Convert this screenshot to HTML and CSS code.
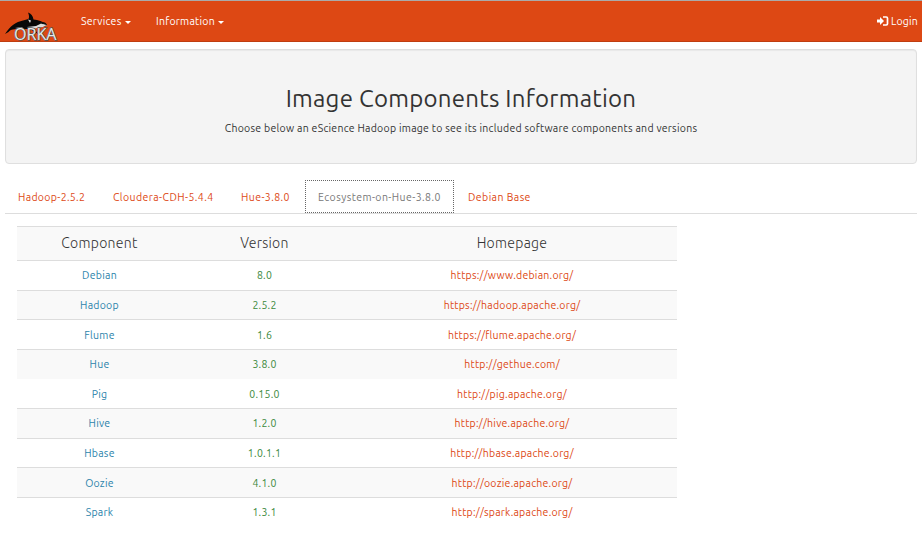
FILE: index.html
```
<!DOCTYPE html>
<html lang="en">
<head>
<meta charset="utf-8">
<title>Orka - Image Components Information</title>
<link rel="stylesheet" href="styles.css">
</head>
<body>
<header class="navbar">
  <a class="brand" aria-label="Orka">
    <svg width="54" height="31" viewBox="0 0 54 31">
      <path d="M0 22C5 14 11 10 18 8.500L23.500 7C24.500 5 24 3 23 0.500C26 1.500 28 4 28.500 7.500C33 8 38 9.500 42 12.500L41 14L34 16L28 15L33 22L25 17L15 17C9 17 6 17 3.500 20L0 22Z" fill="#080808"/>
      <path d="M23 7.500L26 8.500L25 11ZM31 14L37 11L40 12.500L42 13L38 15L32 16L28 17L22 15ZM10 16L18 15L15 17Z" fill="#ddd"/>
      <path d="M34 10L40 10.500L42 12.500L37 12Z" fill="#111"/>
      <text class="logo-text" x="9" y="27.500" textLength="42.500" lengthAdjust="spacingAndGlyphs">ORKA</text>
    </svg>
  </a>
  <a class="nav-link services">Services<i class="caret"></i></a>
  <a class="nav-link information">Information<i class="caret"></i></a>
  <a class="login">
    <svg width="12" height="10" viewBox="0 0 12 10"><path d="M0 3.500H3V1L7 5L3 9V6.500H0Z" fill="#fff"/><path d="M6 1H9.300Q10.500 1 10.500 2.200V7.800Q10.500 9 9.300 9H6" fill="none" stroke="#fff" stroke-width="1.700"/></svg>
    <span>Login</span>
  </a>
</header>
<main class="page">
  <section class="hero">
    <h1>Image Components Information</h1>
    <p>Choose below an eScience Hadoop image to see its included software components and versions</p>
  </section>
  <nav class="tabs">
    <a class="tab t1">Hadoop-2.5.2</a>
    <a class="tab t2">Cloudera-CDH-5.4.4</a>
    <a class="tab t3">Hue-3.8.0</a>
    <a class="tab t4 active">Ecosystem-on-Hue-3.8.0</a>
    <a class="tab t5">Debian Base</a>
  </nav>
  <section class="components">
    <div class="row head"><span>Component</span><span>Version</span><span>Homepage</span></div>
    <div class="row"><b>Debian</b><em>8.0</em><a>https://www.debian.org/</a></div>
    <div class="row"><b>Hadoop</b><em>2.5.2</em><a>https://hadoop.apache.org/</a></div>
    <div class="row low"><b>Flume</b><em>1.6</em><a>https://flume.apache.org/</a></div>
    <div class="row"><b>Hue</b><em>3.8.0</em><a>http://gethue.com/</a></div>
    <div class="row borderless low"><b>Pig</b><em>0.15.0</em><a>http://pig.apache.org/</a></div>
    <div class="row"><b>Hive</b><em>1.2.0</em><a>http://hive.apache.org/</a></div>
    <div class="row"><b>Hbase</b><em>1.0.1.1</em><a>http://hbase.apache.org/</a></div>
    <div class="row low"><b>Oozie</b><em>4.1.0</em><a>http://oozie.apache.org/</a></div>
    <div class="row"><b>Spark</b><em>1.3.1</em><a>http://spark.apache.org/</a></div>
  </section>
</main>
</body>
</html>
```
FILE: styles.css
```
* { box-sizing: border-box; }
body {
  margin: 0;
  height: 535px;
  overflow: hidden;
  background: #fff;
  color: #333;
  font: 10.5px/16px Ubuntu, "Noto Sans", sans-serif;
  letter-spacing: .26px;
}
.navbar {
  display: flex;
  height: 42px;
  padding: 0 4px 0 5px;
  background: #dd4814;
  border-top: 1px solid #aaa;
  border-bottom: 1px solid #bf3e11;
  color: #fff;
}
.brand { width: 76px; padding-top: 11px; letter-spacing: 0; }
.brand svg { display: block; }
.logo-text {
  font: 16.5px "Open Sans", sans-serif;
  fill: #e8e8e8;
  stroke: #555;
  stroke-width: 1.3px;
  paint-order: stroke;
}
.nav-link { display: flex; align-items: flex-start; padding-top: 12px; }
.services { width: 75px; }
.caret {
  margin: 8px 0 0 4px;
  border: 3.5px solid transparent;
  border-top-color: #fff;
  border-bottom: 0;
}
.information .caret { margin-left: 3px; }
.login { display: flex; gap: 2px; margin-left: auto; padding-top: 12px; letter-spacing: .2px; }
.login svg { margin-top: 3px; }
.page { padding: 7px 5px 0; }
.hero {
  height: 115px;
  padding-top: 34px;
  background: #f4f4f4;
  border: 1px solid #dfdfdf;
  border-radius: 4px;
  box-shadow: inset 0 1px 1px rgba(0, 0, 0, .05);
  text-align: center;
}
h1 { margin: 0; font-size: 24px; line-height: 30px; font-weight: 400; }
.hero p { margin: 6px 0 0; }
.tabs {
  display: flex;
  height: 34px;
  margin-top: 16px;
  border-bottom: 1px solid #ddd;
  color: #dd4814;
  letter-spacing: .43px;
}
.tab { padding: 9px 0 0 13px; white-space: nowrap; }
.t1 { width: 95px; letter-spacing: .33px; }
.t2 { width: 128px; }
.t3 { width: 77px; }
.t4 { width: 149px; height: 33px; padding: 8px 0 0 12px; }
.t5 { padding-left: 14px; }
.tab.active { color: #777; border: 1px dotted #666; background: #fff; }
.components {
  display: grid;
  grid-template-rows: 34px 30px 29px 30px 29px 30px 30px 29px 30px 30px;
  width: 660px;
  margin: 12px 0 0 12px;
}
.row {
  display: grid;
  grid-template-columns: 165px 165px 330px;
  padding-top: 6px;
  border-top: 1px solid #ddd;
  text-align: center;
}
.row:nth-child(odd) { background: #f9f9f9; }
.row.low { padding-top: 7px; }
.row.head { padding-top: 8px; font-size: 14px; font-weight: 300; letter-spacing: .3px; }
.row.borderless { border-top-color: #f9f9f9; }
.row b { color: #2c83ab; font-weight: 400; }
.row em { color: #3a883b; font-style: normal; }
.row a { color: #dd4814; }
```
